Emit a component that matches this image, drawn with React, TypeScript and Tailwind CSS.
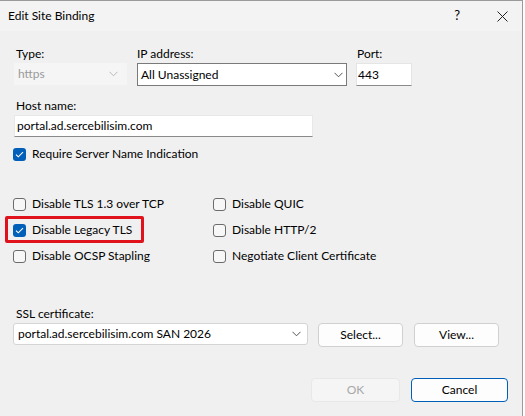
import React from "react";

const font = { fontFamily: 'Lato, "Noto Sans", sans-serif' };

function Chevron({ muted = false }: { muted?: boolean }) {
  return (
    <svg width="9" height="6" viewBox="0 0 9 6" className="shrink-0">
      <path
        d="M0.5 0.8 L4.5 4.8 L8.5 0.8"
        fill="none"
        stroke={muted ? "#b8b8b8" : "#555"}
        strokeWidth="1"
      />
    </svg>
  );
}

function CheckBox({ checked, label }: { checked?: boolean; label: string }) {
  return (
    <div className="flex items-center gap-[6px] h-[16px]">
      {checked ? (
        <div className="w-[13px] h-[13px] rounded-[3px] bg-[#005fb8] flex items-center justify-center">
          <svg width="9" height="7" viewBox="0 0 9 7">
            <path d="M1 3.6 L3.3 5.8 L8 1.2" fill="none" stroke="#fff" strokeWidth="1.1" />
          </svg>
        </div>
      ) : (
        <div className="w-[13px] h-[13px] rounded-[3px] border border-[#6b6b6b] bg-[#f7f7f7]" />
      )}
      <span>{label}</span>
    </div>
  );
}

export default function App() {
  return (
    <div className="w-[525px] h-[416px] bg-white" style={font}>
      <div className="w-[523px] h-[416px] bg-[#f0f0f0] border-t border-r border-[#9a9a9a] text-[12px] text-black flex flex-col">
        {/* title bar */}
        <div className="h-[30px] flex items-center pl-[8px] pr-[14px] bg-[#f3f3f3]">
          <span className="flex-1">Edit Site Binding</span>
          <span className="mr-[37px] text-[13px]">?</span>
          <svg width="11" height="11" viewBox="0 0 11 11">
            <path d="M0.5 0.5 L10.5 10.5 M10.5 0.5 L0.5 10.5" stroke="#222" strokeWidth="1" />
          </svg>
        </div>

        <div className="flex flex-col pl-[14px] pt-[14px]">
          {/* type / ip / port */}
          <div className="flex gap-[10px]">
            <div className="flex flex-col w-[113px]">
              <span className="pl-[2px] h-[18px]">Type:</span>
              <div className="h-[22px] bg-[#f5f5f5] flex items-center justify-between pl-[4px] pr-[9px] text-[#9a9a9a]">
                <span>https</span>
                <Chevron muted />
              </div>
            </div>
            <div className="flex flex-col w-[210px]">
              <span className="h-[18px]">IP address:</span>
              <div className="h-[23px] bg-white border border-[#7a7a7a] flex items-center justify-between pl-[3px] pr-[3px]">
                <span>All Unassigned</span>
                <Chevron />
              </div>
            </div>
            <div className="flex flex-col w-[56px] ml-[-1px]">
              <span className="pl-[1px] h-[18px]">Port:</span>
              <div className="h-[23px] bg-white border border-[#e5e5e5] border-b-[#8a8a8a] flex items-center pl-[1px]">
                443
              </div>
            </div>
          </div>

          {/* host name */}
          <span className="pl-[2px] mt-[11px] h-[18px]">Host name:</span>
          <div className="w-[299px] h-[22px] bg-white border border-[#e8e8e8] border-b-[#8a8a8a] flex items-center pl-[2px]">
            portal.ad.sercebilisim.com
          </div>

          <div className="mt-[9px] -ml-[1px]">
            <CheckBox checked label="Require Server Name Indication" />
          </div>

          {/* protocol options */}
          <div className="mt-[34px] -ml-[1px] grid grid-cols-[200px_1fr] gap-y-[10px]">
            <CheckBox label="Disable TLS 1.3 over TCP" />
            <CheckBox label="Disable QUIC" />
            <div className="relative">
              <CheckBox checked label="Disable Legacy TLS" />
              <div className="absolute left-[-8px] top-[-6px] w-[139px] h-[27px] border-[3px] border-[#e0121b] rounded-[2px]" />
            </div>
            <CheckBox label="Disable HTTP/2" />
            <CheckBox label="Disable OCSP Stapling" />
            <CheckBox label="Negotiate Client Certificate" />
          </div>

          {/* ssl cert */}
          <span className="pl-[2px] mt-[41px] h-[18px]">SSL certificate:</span>
          <div className="flex items-start -ml-[1px]">
            <div className="w-[295px] h-[22px] bg-white border border-[#d4d4d4] rounded-[3px] flex items-center justify-between pl-[4px] pr-[6px]">
              <span>portal.ad.sercebilisim.com SAN 2026</span>
              <Chevron />
            </div>
            <button className="ml-[10px] w-[85px] h-[24px] bg-[#fdfdfd] border border-[#d0d0d0] rounded-[4px]">
              Select...
            </button>
            <button className="ml-[11px] w-[85px] h-[24px] bg-[#fdfdfd] border border-[#d0d0d0] rounded-[4px]">
              View...
            </button>
          </div>

          {/* dialog buttons */}
          <div className="flex mt-[31px] ml-[297px]">
            <button className="w-[89px] h-[24px] bg-[#f5f5f5] border border-[#e8e8e8] rounded-[4px] text-[#a8a8a8]">
              OK
            </button>
            <button className="ml-[11px] w-[97px] h-[24px] bg-[#fdfdfd] border border-[#005fb8] rounded-[4px]">
              Cancel
            </button>
          </div>
        </div>
      </div>
    </div>
  );
}
